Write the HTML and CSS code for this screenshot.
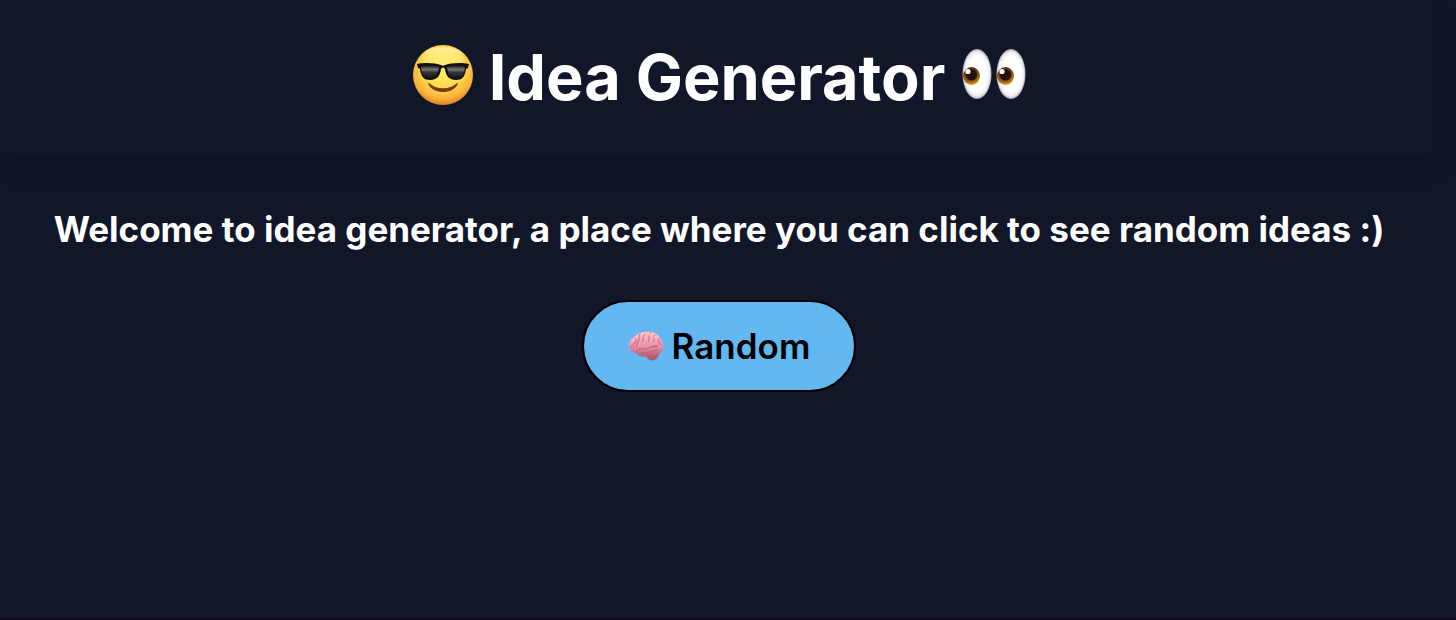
FILE: index.html
```html
<!DOCTYPE html>
<html lang="en">
<head>
<meta charset="utf-8">
<meta name="viewport" content="width=device-width, initial-scale=1">
<title>Idea Generator</title>
<link rel="stylesheet" href="styles.css">
</head>
<body>
<div class="page">
  <header class="header">
    <h1 class="title">
      <svg class="face" viewBox="0 0 60 60" role="img" aria-label="Smiling face with sunglasses">
        <defs>
          <radialGradient id="skin" cx="50%" cy="38%" r="64%">
            <stop offset="0" stop-color="#fff06a"/><stop offset=".5" stop-color="#ffdc50"/><stop offset=".8" stop-color="#f9b43b"/><stop offset="1" stop-color="#d97a1c"/>
          </radialGradient>
          <linearGradient id="shine" x2="0" y2="1"><stop offset="0" stop-color="#fff9c0" stop-opacity=".7"/><stop offset="1" stop-color="#fff38a" stop-opacity="0"/></linearGradient>
          <linearGradient id="lens" x2="0" y2="1"><stop offset="0" stop-color="#242424"/><stop offset=".3" stop-color="#747474"/><stop offset=".55" stop-color="#333"/><stop offset="1" stop-color="#151515"/></linearGradient>
        </defs>
        <circle cx="30" cy="30" r="30" fill="url(#skin)"/>
        <ellipse cx="30" cy="13" rx="21" ry="11" fill="url(#shine)"/>
        <path d="M16 38c7 7 21 7 28 0 .7 0 1 .6.6 1.400-5 10-24 10-29.200 0-.4-.8 0-1.400.6-1.400z" fill="#783d08"/>
        <path d="M4 19c8-2 19-1 24 1q2 1 4 0c5-2 16-3 24-1l-1 4-2 1c-1 8-4 11-10 11-7 0-10-4-11-11q-2-3-4 0c-1 7-4 11-11 11-6 0-9-3-10-11l-2-1z" fill="#111"/>
        <path d="M8 22c5-2 13-1 18 0-1 7-3 11-9 11-5 0-8-2-9-11z" fill="url(#lens)"/>
        <path d="M52 22c-5-2-13-1-18 0 1 7 3 11 9 11 5 0 8-2 9-11z" fill="url(#lens)"/>
      </svg>
      <span>Idea Generator</span>
      <svg class="eyes" viewBox="0 0 66 52" role="img" aria-label="Eyes">
        <defs>
          <radialGradient id="white"><stop offset=".7" stop-color="#fff"/><stop offset=".88" stop-color="#eeeef0"/><stop offset="1" stop-color="#a9a9b2"/></radialGradient>
          <radialGradient id="iris" cx="45%" cy="30%" r="70%"><stop offset=".4" stop-color="#593109"/><stop offset=".75" stop-color="#99610e"/><stop offset="1" stop-color="#d8a526"/></radialGradient>
          <g id="eye">
            <ellipse cx="16" cy="25" rx="14.500" ry="25" fill="url(#white)"/>
            <ellipse cx="10.500" cy="27" rx="8.500" ry="9" fill="url(#iris)"/>
            <circle cx="10.500" cy="26" r="5.500" fill="#211006"/>
            <circle cx="7" cy="22.500" r="2.600" fill="#fff"/>
          </g>
        </defs>
        <use href="#eye"/><use href="#eye" x="34"/>
      </svg>
    </h1>
  </header>
  <main class="main">
    <h2 class="welcome">Welcome to idea generator, a place where you can click to see random ideas :)</h2>
    <button class="random" type="button">
      <svg class="brain" viewBox="0 0 36 30" aria-hidden="true">
        <defs><linearGradient id="pink" x2="0" y2="1"><stop offset="0" stop-color="#ffc3ce"/><stop offset=".6" stop-color="#ec91a9"/><stop offset="1" stop-color="#b65b73"/></linearGradient></defs>
        <path d="M17 23c4-3 12-3 14 0-1 6-7 8-11 5z" fill="#ae5f67"/>
        <path d="M1 14c0-4 2-7 6-9 4-4 10-5 15-4 6 0 10 4 12 9 3 6 0 13-6 14-3 1-6 0-8 1-5 1-10 1-11-3-5 0-8-3-8-8z" fill="url(#pink)"/>
        <g fill="none" stroke="#bf617f" stroke-width="1" stroke-linecap="round">
          <path d="M9 22c-1-4 3-5 7-4 5 0 8-4 13-3M12 22c4-1 8 1 12-2l5-1M3 16c3 0 2-4 5-5M6 7c2 0 3 2 1 4m5-8c-3 3 1 4-2 8l-2 5m9-13c-4 4 0 5-3 8m8-9c-3 4 1 5-2 9m7-7c-3 2 1 4-2 7m7-3c-3 0-1 4 1 6m-9 2c3 1 3-2 6-1"/>
        </g>
        <path d="M5 10c1-3 4-4 5-5m4-1 2-1m4 1 2-1m4 3 2 1" fill="none" stroke="#ffdce2" stroke-linecap="round"/>
      </svg>
      <span>Random</span>
    </button>
  </main>
</div>
</body>
</html>
```
FILE: styles.css
```css
* {
  box-sizing: border-box;
}

body {
  margin: 0;
  background: #111628;
  color: #fff;
  font-family: Inter, "Liberation Sans", sans-serif;
}

.page {
  min-height: 100vh;
  padding-right: 18px;
  border-bottom: 2px solid #0e0c1c;
}

.header {
  padding: 38px 22px 42px 24px;
  box-shadow: 0 12px 24px -4px rgba(0, 0, 0, 0.1);
}

.title {
  display: flex;
  justify-content: center;
  align-items: center;
  gap: 16px;
  margin: 0;
  font-size: 63px;
  line-height: 78px;
  font-weight: 700;
}

.face {
  width: 60px;
  height: 60px;
  margin-bottom: 4px;
}

.eyes {
  width: 66px;
  height: 52px;
  margin-bottom: 4px;
}

.main {
  display: flex;
  flex-direction: column;
  align-items: center;
  gap: 48px;
  padding: 48px 24px;
}

.welcome {
  margin: 0;
  font-size: 35px;
  line-height: 46px;
  font-weight: 700;
  text-align: center;
}

.random {
  display: flex;
  align-items: center;
  gap: 8px;
  padding: 20px 44px;
  border: 2px solid #000;
  border-radius: 48px;
  background: #63b8f2;
  color: #000;
  font: inherit;
  font-size: 35px;
  line-height: 48px;
  font-weight: 600;
  cursor: pointer;
}

.brain {
  width: 36px;
  height: 30px;
}
```
